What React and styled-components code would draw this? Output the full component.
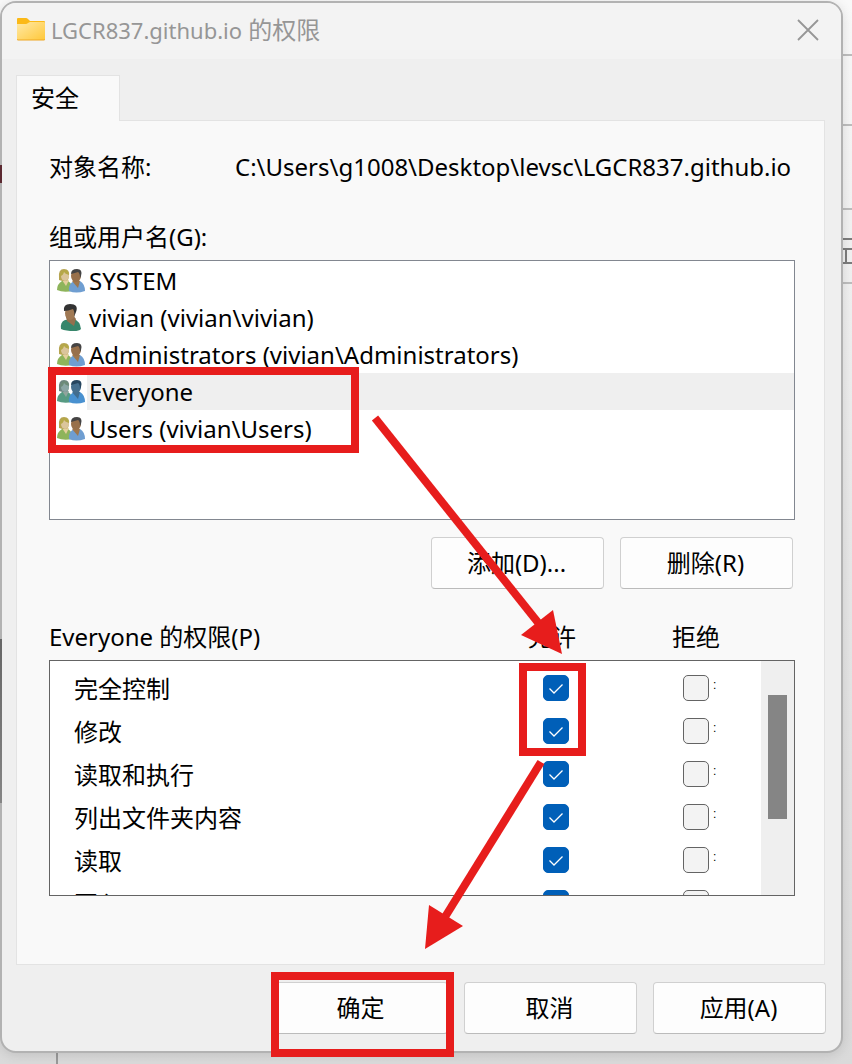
import React, { useState } from 'react';
import styled, { createGlobalStyle } from 'styled-components';

const users = [
    { name: 'SYSTEM', type: 'group' },
    { name: 'vivian (vivian\\vivian)', type: 'user' },
    { name: 'Administrators (vivian\\Administrators)', type: 'group' },
    { name: 'Everyone', type: 'group' },
    { name: 'Users (vivian\\Users)', type: 'group' },
];

const permissions = ['完全控制', '修改', '读取和执行', '列出文件夹内容', '读取', '写入'];

function FolderIcon() {
    return (
        <svg width="28" height="24" viewBox="0 0 28 24" aria-hidden="true">
            <defs>
                <linearGradient id="folder" x1="0" y1="0" x2="1" y2="1">
                    <stop offset="0" stopColor="#ffe9a6" />
                    <stop offset="1" stopColor="#ffc83a" />
                </linearGradient>
            </defs>
            <path d="M0 1 Q0 0 1 0 H9 Q10 0 11 1 L13 3 H27 Q28 3 28 4 V12 H0Z" fill="#fbb917" />
            <path d="M0 6 H9 Q10 6 11 5 L13 4 H27 Q28 4 28 5 V21 Q28 22 27 22 H1 Q0 22 0 21Z" fill="url(#folder)" />
            <path d="M0 21 Q0 22 1 22 H27 Q28 22 28 21" fill="none" stroke="#efa824" />
        </svg>
    );
}

function GroupIcon({ selected }) {
    return (
        <svg width="28" height="28" viewBox="0 0 28 28" aria-hidden="true">
            <path d="M0 23 Q0 17 5 14 L11 14 Q16 17 16 24 Q6 26 0 23Z" fill={selected ? '#579b83' : '#8eb45b'} />
            <path d="M5 13 L9 19 L12 13Z" fill={selected ? '#91a49d' : '#e5cf9c'} />
            <path d="M2 11 Q1 2 7 2 Q13 2 12 9 L11 13 Q7 15 2 13Z" fill={selected ? '#6d8580' : '#b6a451'} />
            <ellipse cx="8" cy="9" rx="4" ry="5" fill={selected ? '#8ba6a5' : '#dbc59b'} />
            <path d="M3 9 Q4 3 8 3 Q12 4 12 8 Q8 7 7 5 Q6 9 3 9Z" fill={selected ? '#6d8b78' : '#b5a847'} />
            <path d="M12 24 Q11 17 17 14 L23 14 Q28 17 28 24 Q19 27 12 24Z" fill={selected ? '#4991d0' : '#6f9ed1'} />
            <path d="M15 14 L21 21 L23 14Z" fill={selected ? '#426d8f' : '#9f774d'} />
            <ellipse cx="19" cy="9" rx="5" ry="6" fill={selected ? '#466f8e' : '#98704b'} />
            <path d="M14 7 Q14 2 20 2 Q26 2 24 9 L23 11 Q23 6 21 5 Q18 6 14 7Z" fill={selected ? '#27465f' : '#454444'} />
        </svg>
    );
}

function UserIcon() {
    return (
        <svg width="28" height="28" viewBox="0 0 28 28" aria-hidden="true">
            <path d="M4 25 Q3 18 8 16 L17 15 Q23 17 24 25 Q22 27 17 27 Q9 27 4 25Z" fill="#37866b" />
            <path d="M9 13 L10 17 L17 22 L19 15 L16 11Z" fill="#94704e" />
            <ellipse cx="13" cy="9" rx="5" ry="7" fill="#a07954" />
            <path d="M7 7 Q6 0 13 0 Q22 0 19 8 L17 13 Q18 8 16 5 Q11 7 7 7Z" fill="#333333" />
        </svg>
    );
}

function CheckBox({ label, checked, onChange }) {
    return (
        <Check>
            <input type="checkbox" aria-label={label} checked={checked} onChange={onChange} />
            {checked && (
                <svg viewBox="0 0 26 26" aria-hidden="true">
                    <path d="M6.5 13.5 L11 18 L19.5 9.5" fill="none" stroke="#fff" strokeWidth="1.3" />
                </svg>
            )}
        </Check>
    );
}

function Arrows() {
    return (
        <ArrowLayer width="852" height="1064" viewBox="0 0 852 1064" aria-hidden="true">
            <path d="M375 418 L540 625" />
            <path d="M541 762 L445 917" />
            <polygon points="562,654 521,635 553,610" />
            <polygon points="425,949 429,905 463,926" />
        </ArrowLayer>
    );
}

function App() {
    const [selected, setSelected] = useState('Everyone');
    const [allowed, setAllowed] = useState(permissions);
    const [denied, setDenied] = useState([]);

    const toggle = (list, setList, item) => {
        setList(list.includes(item) ? list.filter((i) => i !== item) : [...list, item]);
    };

    return (
        <Page>
            <GlobalStyle />
            <Backdrop aria-hidden="true">
                <Rule $top={54} />
                <Rule $top={124} />
                <Rule $top={208} />
                <Rule $top={238} $dark />
                <Rule $top={248} $dark />
                <Rule $top={262} $dark />
                <Stem />
                <Rule $top={282} />
                <Post />
            </Backdrop>
            <Window>
                <TitleBar>
                    <FolderIcon />
                    <Title>
                        <FolderName>LGCR837.github.io</FolderName> 的权限
                    </Title>
                    <CloseButton aria-label="关闭">
                        <svg width="22" height="22" viewBox="0 0 22 22" aria-hidden="true">
                            <path d="M1 1 L21 21 M21 1 L1 21" fill="none" stroke="#969696" strokeWidth="1.8" />
                        </svg>
                    </CloseButton>
                </TitleBar>
                <Body>
                    <Tab type="button">安全</Tab>
                    <Panel>
                        <ObjectRow>
                            <span>对象名称:</span>
                            <ObjectPath>C:\Users\g1008\Desktop\levsc\LGCR837.github.io</ObjectPath>
                        </ObjectRow>
                        <GroupLabel id="groups">组或用户名(G):</GroupLabel>
                        <Marked>
                            <UserList role="listbox" aria-labelledby="groups">
                                {users.map(({ name, type }) => (
                                    <UserRow
                                        key={name}
                                        role="option"
                                        aria-selected={selected === name}
                                        onClick={() => setSelected(name)}
                                    >
                                        {type === 'user' ? <UserIcon /> : <GroupIcon selected={selected === name} />}
                                        <UserName $selected={selected === name}>{name}</UserName>
                                    </UserRow>
                                ))}
                            </UserList>
                            <UsersMark />
                        </Marked>
                        <ListActions>
                            <Button type="button">添加(D)...</Button>
                            <Button type="button">删除(R)</Button>
                        </ListActions>
                        <PermissionHeader>
                            <span>{selected} 的权限(P)</span>
                            <span>允许</span>
                            <span>拒绝</span>
                        </PermissionHeader>
                        <PermissionBox>
                            <PermissionTable aria-label="权限">
                                <tbody>
                                    {permissions.map((item) => (
                                        <tr key={item}>
                                            <th scope="row">{item}</th>
                                            <td>
                                                <CheckBox
                                                    label={`允许 ${item}`}
                                                    checked={allowed.includes(item)}
                                                    onChange={() => toggle(allowed, setAllowed, item)}
                                                />
                                            </td>
                                            <td>
                                                <DenyCell>
                                                    <CheckBox
                                                        label={`拒绝 ${item}`}
                                                        checked={denied.includes(item)}
                                                        onChange={() => toggle(denied, setDenied, item)}
                                                    />
                                                    <Colon>:</Colon>
                                                </DenyCell>
                                            </td>
                                        </tr>
                                    ))}
                                </tbody>
                            </PermissionTable>
                            <ScrollTrack>
                                <ScrollThumb />
                            </ScrollTrack>
                            <ChecksMark />
                        </PermissionBox>
                    </Panel>
                </Body>
                <Footer>
                    <Marked>
                        <Button type="button">确定</Button>
                        <ConfirmMark />
                    </Marked>
                    <Button type="button">取消</Button>
                    <Button type="button">应用(A)</Button>
                </Footer>
            </Window>
            <Arrows />
        </Page>
    );
}

const GlobalStyle = createGlobalStyle`
* {
    box-sizing: border-box;
}

body {
    margin: 0;
    color: #000;
    font-family: "Noto Sans", "Noto Sans CJK SC", sans-serif;
    font-size: 24px;
    line-height: 36px;
}

button {
    font: inherit;
    color: inherit;
}
`;

const Page = styled.div`
    position: relative;
    min-height: 100vh;
    padding: 1px 9px 11px 0;
    overflow: hidden;
    background: linear-gradient(#f9f9f9, #e8e8e8 50%, #dadada);
`;

const Backdrop = styled.div`
    position: absolute;
    inset: 0;
`;

const Rule = styled.div`
    position: absolute;
    top: ${({ $top }) => $top}px;
    right: 0;
    width: 14px;
    height: 2px;
    background: ${({ $dark }) => ($dark ? '#7c7c7c' : '#bdbdbd')};
`;

const Stem = styled.div`
    position: absolute;
    top: 248px;
    right: 5px;
    width: 2px;
    height: 16px;
    background: #7c7c7c;
`;

const Post = styled.div`
    position: absolute;
    bottom: 0;
    left: 56px;
    width: 2px;
    height: 14px;
    background: #999;
`;

const Window = styled.main`
    position: relative;
    border: 2px solid #b2b2b2;
    border-radius: 16px;
    background: #efefef;
    box-shadow: 0 2px 12px rgba(0, 0, 0, 0.12);

    /* slice of the window behind, along the left edge */
    &::before {
        content: '';
        position: absolute;
        top: 636px;
        left: -2px;
        width: 2px;
        height: 164px;
        background: linear-gradient(#666, #858585);
    }

    &::after {
        content: '';
        position: absolute;
        top: 162px;
        left: -2px;
        width: 2px;
        height: 18px;
        background: #5b2930;
    }
`;

const TitleBar = styled.header`
    display: flex;
    align-items: center;
    gap: 6px;
    height: 56px;
    padding: 0 22px 2px 15px;
    border-radius: 14px 14px 0 0;
    background: #f3f3f3;
`;

const Title = styled.h1`
    flex: 1;
    margin: 0;
    color: #969696;
    font-size: 24px;
    font-weight: 400;
`;

const FolderName = styled.span`
    font-size: 22px;
`;

const CloseButton = styled.button`
    display: flex;
    padding: 0;
    border: 0;
    background: none;
`;

const Body = styled.div`
    padding: 16px 16px 0 14px;
`;

const Tab = styled.button`
    position: relative;
    display: block;
    width: 104px;
    height: 46px;
    margin-bottom: -1px;
    padding: 0 0 2px 14px;
    border: 1px solid #e3e3e3;
    border-bottom: 0;
    background: #f9f9f9;
    text-align: left;
`;

const Panel = styled.section`
    padding: 28px 29px 68px 32px;
    border: 1px solid #e3e3e3;
    background: #f9f9f9;
`;

const ObjectRow = styled.div`
    display: grid;
    grid-template-columns: 186px 1fr;
`;

const ObjectPath = styled.span`
    overflow: hidden;
    white-space: nowrap;
`;

const GroupLabel = styled.div`
    margin-top: 34px;
`;

const Marked = styled.div`
    position: relative;
`;

const UserList = styled.ul`
    height: 260px;
    margin: 5px 0 0;
    padding: 1px 0 0 7px;
    border: 1px solid #828790;
    background: #fff;
    list-style: none;
`;

const UserRow = styled.li`
    display: flex;
    align-items: center;
    gap: 2px;
    height: 37px;
`;

const UserName = styled.span`
    flex: 1;
    padding-left: 2px;
    line-height: 37px;
    background: ${({ $selected }) => ($selected ? '#efefef' : 'transparent')};
`;

const ListActions = styled.div`
    display: flex;
    justify-content: flex-end;
    gap: 16px;
    margin: 17px 2px 0 0;
`;

const Button = styled.button`
    display: block;
    width: 173px;
    height: 52px;
    padding: 0 2px 0 0;
    border: 1px solid #d0d0d0;
    border-bottom-color: #bbb;
    border-radius: 4px;
    background: #fdfdfd;
    white-space: nowrap;
`;

const PermissionHeader = styled.div`
    display: grid;
    grid-template-columns: 1fr 144px 123px;
    margin-top: 30px;
`;

const PermissionBox = styled.div`
    position: relative;
    display: flex;
    height: 236px;
    margin-top: 5px;
    overflow: hidden;
    border: 1px solid #646464;
    background: #fff;
`;

const PermissionTable = styled.table`
    flex: 1;
    height: 258px;
    margin-top: 5px;
    border-collapse: collapse;
    table-layout: fixed;

    tr {
        height: 43px;
    }

    th,
    td {
        padding: 0;
        vertical-align: middle;
    }

    th {
        padding: 2px 0 0 24px;
        font-weight: 400;
        text-align: left;
    }

    td:nth-child(2) {
        width: 140px;
    }

    td:nth-child(3) {
        width: 78px;
    }
`;

const Check = styled.label`
    position: relative;
    display: block;
    width: 26px;
    height: 26px;

    input {
        appearance: none;
        display: block;
        width: 26px;
        height: 26px;
        margin: 0;
        border: 1px solid #646464;
        border-radius: 5px;
        background: #f3f3f3;
    }

    input:checked {
        border-color: #005fb8;
        background: #005fb8;
    }

    svg {
        position: absolute;
        inset: 0;
        pointer-events: none;
    }
`;

const DenyCell = styled.div`
    display: flex;
    gap: 4px;
`;

const Colon = styled.span`
    font-family: "Liberation Sans", sans-serif;
    font-size: 12px;
    line-height: 20px;
`;

const ScrollTrack = styled.div`
    width: 33px;
    padding: 34px 7px 0;
    background: #efefef;
`;

const ScrollThumb = styled.div`
    height: 124px;
    background: #858585;
`;

const Footer = styled.footer`
    display: flex;
    justify-content: flex-end;
    gap: 16px;
    padding: 17px 15px;
`;

// red call-outs drawn over the dialog
const Mark = styled.div`
    position: absolute;
    z-index: 1;
    border: 8px solid #e71d1c;
    pointer-events: none;
`;

const UsersMark = styled(Mark)`
    top: 107px;
    left: -1px;
    width: 311px;
    height: 86px;
`;

const ChecksMark = styled(Mark)`
    top: 2px;
    right: 208px;
    width: 67px;
    height: 93px;
`;

const ConfirmMark = styled(Mark)`
    inset: -10px -6px -23px -4px;
`;

const ArrowLayer = styled.svg`
    position: absolute;
    top: 0;
    left: 0;
    z-index: 2;
    pointer-events: none;

    path {
        fill: none;
        stroke: #e71d1c;
        stroke-width: 8px;
    }

    polygon {
        fill: #e71d1c;
    }
`;

export default App;
